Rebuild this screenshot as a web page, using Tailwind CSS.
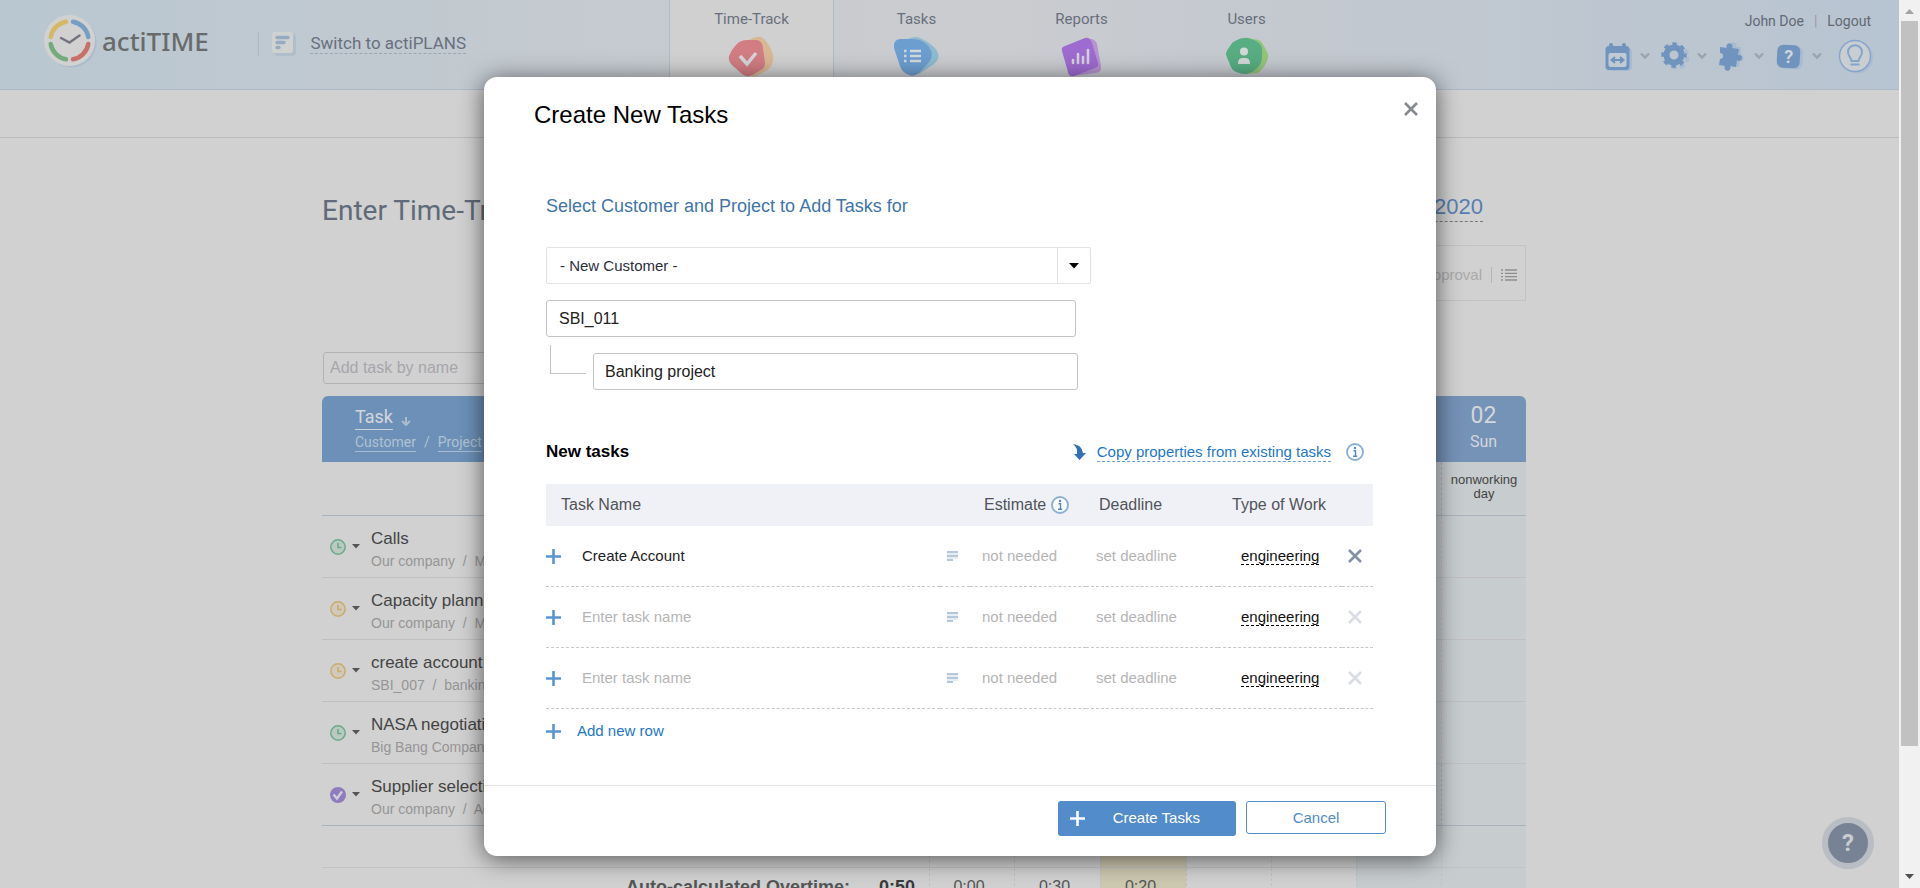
<!DOCTYPE html>
<html lang="en">
<head>
<meta charset="utf-8">
<title>actiTIME - Enter Time-Track</title>
<script src="https://cdn.jsdelivr.net/npm/@tailwindcss/browser@4"></script>
</head>
<body class="relative flex h-screen overflow-hidden bg-[#d1d1d1] font-['Liberation_Sans',Arial,sans-serif] text-[#444]">

<svg class="hidden" aria-hidden="true">
  <symbol id="chev" viewBox="0 0 12 8"><path d="M2 1.5l4 4 4-4" fill="none" stroke="#99a3b1" stroke-width="2.4"/></symbol>
  <symbol id="info" viewBox="0 0 18 18"><circle cx="9" cy="9" r="8" fill="#fbfdff" stroke="#8bb0d3" stroke-width="1.8"/><path d="M7.500 7.700h2v5.300M7 13.200h4.200" fill="none" stroke="#5688ba" stroke-width="1.400"/><circle cx="9" cy="5" r="1.200" fill="#5688ba"/></symbol>
  <symbol id="plus" viewBox="0 0 15 15"><path d="M7.500 0v15M0 7.500h15" stroke="currentColor" stroke-width="2.600"/></symbol>
  <symbol id="note" viewBox="0 0 11 10"><path d="M0 3h11M0 7h11" stroke="#e6edf3" stroke-width="2"/><path d="M0 1h11M0 5h11M0 9h6" stroke="#b4c8da" stroke-width="2"/></symbol>
  <symbol id="cross" viewBox="0 0 14 14"><path d="M1 1l12 12M13 1L1 13" stroke="currentColor" stroke-width="2.600"/></symbol>
  <symbol id="clock" viewBox="0 0 16 16"><circle cx="8" cy="8" r="7.200" fill="currentColor" fill-opacity=".2" stroke="currentColor" stroke-width="1.500"/><path d="M8 4v4.500h3.500" fill="none" stroke="currentColor" stroke-width="1.600"/></symbol>
  <symbol id="caret" viewBox="0 0 8 5"><path d="M0 0h8L4 4.500z" fill="currentColor"/></symbol>
</svg>

<div class="flex min-w-0 flex-1 flex-col overflow-hidden">
  <header class="flex h-[90px] shrink-0 border-b border-[#afb9c6] bg-linear-to-r from-[#b9c7d1] via-[#cbcccf] to-[#b7c4d1] font-[Roboto,sans-serif]">
    <div class="flex w-[669px] pl-[43px]">
      <a href="#" class="flex h-[82px] items-center" aria-label="actiTIME">
        <svg class="size-[54px]" viewBox="0 0 54 54" fill="none" stroke-width="4.500" stroke-linecap="round">
          <circle cx="28.500" cy="28.500" r="25" fill="#adbccb"/><circle cx="26.500" cy="26.500" r="25.500" fill="#d1d1d1"/>
          <path d="M7.700 23A19 19 0 0 1 23 7.700" stroke="#d5b866"/><path d="M30 7.700A19 19 0 0 1 45.300 23" stroke="#769dc4"/>
          <path d="M45.300 30A19 19 0 0 1 30 45.300" stroke="#c96f69"/><path d="M23 45.300A19 19 0 0 1 7.700 30" stroke="#75ab7c"/>
          <path d="M18 24l8.500 4.500 10-7" stroke="#747480" stroke-width="2.400"/>
        </svg>
        <span class="ml-[5px] font-['Noto_Sans',sans-serif] text-[26px] font-medium text-[#686b6b]">actiTIME</span>
      </a>
      <div class="mr-[203px] ml-auto flex h-[87px] items-center">
        <span class="h-6 w-px bg-[#a9b7c7]"></span>
        <svg class="ml-[13px] size-6" viewBox="0 0 24 24"><rect x="2" y="2" width="22" height="22" rx="4" fill="#b0bdca"/><rect width="21" height="21" rx="3" fill="#d0d1d1"/><path d="M5 5.500h11M5 10.500h7M5 15.500h2" stroke="#94abc4" stroke-width="3.400" stroke-linecap="round"/></svg>
        <a href="#" class="ml-[14px] border-b border-dashed border-[#99a7b5] text-[17px] leading-[20px] whitespace-nowrap text-[#69707d]">Switch to actiPLANS</a>
      </div>
    </div>
    <nav class="flex text-[15px] leading-5 text-[#686f7c]">
      <a href="#" class="flex w-[165px] flex-col items-center border-x border-[#afbac8] bg-[#d0d0d0] pt-[9px]">Time-Track
        <svg class="mt-[7px] h-[42px] w-12" viewBox="0 0 48 42">
          <path d="M20 5Q27 0 33 1Q38 3 43 13Q47 22 44 28Q42 34 34 37L28 40Q22 42 18 36z" fill="#d8b795"/>
          <path d="M8 9Q12 4 20 4H28Q34 4 35 12L37 27Q37 32 33 34L24 39Q19 42 14 38L5 30Q0 26 1 20Q3 14 8 9z" fill="#d17d83"/>
          <path d="M12 20l7 8 9-11" fill="none" stroke="#d4d6d8" stroke-width="3.500"/>
        </svg></a>
      <a href="#" class="flex w-[165px] flex-col items-center pt-[9px]">Tasks
        <svg class="mt-[7px] h-[42px] w-12" viewBox="0 0 48 42">
          <path d="M12 5Q20 -1 27 2Q40 8 44 15Q48 22 41 28L26 38z" fill="#8ebbd0"/>
          <path d="M1 12Q0 3 8 3H20Q30 3 36 11Q41 18 37 25L26 37Q20 42 14 38Q9 36 7 30z" fill="#6d9ed0"/>
          <path d="M11 15h2.500M11 20h2.500M11 25h2.500M17 15h11M17 20h11M17 25h11" stroke="#d3d8de" stroke-width="2.600"/>
        </svg></a>
      <a href="#" class="flex w-[165px] flex-col items-center pt-[9px]">Reports
        <svg class="mt-[7px] h-[42px] w-12" viewBox="0 0 48 42">
          <path d="M28 3Q37 2 39 8L43 30Q44 36 38 37L14 40Q10 40 10 34z" fill="#b694cf"/>
          <path d="M7 10L27 2Q32 1 34 7L40 27Q41 31 37 32L16 40Q11 41 10 36L4 15Q3 11 7 10z" fill="#9e6bd0"/>
          <path d="M15 27v-3M20 27v-9M25 27v-6M30 27V14" stroke="#d5d0dc" stroke-width="2.600" stroke-linecap="round"/>
        </svg></a>
      <a href="#" class="flex w-[165px] flex-col items-center pt-[9px]">Users
        <svg class="mt-[7px] h-[42px] w-12" viewBox="0 0 48 42">
          <path d="M24 2L36 4Q39 5 45 18Q46 22 43 27Q39 35 34 37L22 38z" fill="#94c577"/>
          <path d="M12 5Q19 1 25 2Q33 4 37 8Q40 11 39 20Q39 28 34 32Q28 38 21 38Q14 37 10 34Q8 32 6 26Q3 20 3 17Q4 14 7 10Q9 6 12 5z" fill="#58ad83"/>
          <circle cx="21" cy="15.500" r="4" fill="#d2d8d6"/><path d="M15 28q0-6 4-6h4q4 0 4 6z" fill="#d2d8d6"/>
        </svg></a>
    </nav>
    <div class="ml-auto flex flex-col items-end pt-3 pr-[26px]">
      <div class="flex gap-[10px] pr-[2px] text-[14px] leading-[18px] text-[#626974]"><a href="#">John Doe</a><span class="text-[#9a9a9a]">|</span><a href="#">Logout</a></div>
      <div class="mt-2 flex items-center">
        <button aria-label="Calendar"><svg class="size-[30px]" viewBox="0 0 30 30"><rect x="5" y="7" width="24" height="23" rx="4" fill="#a9bbd1"/><rect x="2.500" y="5" width="24" height="24" rx="3.500" fill="#7194be"/><path d="M8 4v4M21 4v4" stroke="#7194be" stroke-width="4" stroke-linecap="round"/><rect x="5.500" y="12" width="18" height="14" rx="2" fill="#c0cad4"/><path d="M9.500 19h10M12 16l-3.500 3 3.500 3M17 16l3.500 3-3.500 3" fill="#7194be" stroke="#7194be" stroke-width="2"/></svg></button>
        <svg class="ml-[6px] h-2 w-3"><use href="#chev"/></svg>
        <button class="ml-[9px]" aria-label="Settings"><svg class="size-[30px]" viewBox="0 0 30 30" fill="none"><circle cx="17" cy="16" r="10.500" stroke="#a9bbd1" stroke-width="4" stroke-dasharray="5 3.250"/><circle cx="14" cy="14" r="7.500" stroke="#7194be" stroke-width="6"/><circle cx="14" cy="14" r="11" stroke="#7194be" stroke-width="3.500" stroke-dasharray="4.500 4.140" stroke-dashoffset="2"/></svg></button>
        <svg class="ml-[6px] h-2 w-3"><use href="#chev"/></svg>
        <button class="ml-[11px]" aria-label="Integrations"><svg class="size-[30px]" viewBox="0 0 30 30"><path fill="#a9bbd1" d="M6 6h6a3 3 0 1 1 5 0h5v8a3 3 0 1 1-1 6l-1 6h-6L6 24z"/><path fill="#7194be" d="M1 6l7 1a3 3 0 1 1 5 0l7 1-1 6a3 3 0 1 1-1 5l-1 7-6-1a3 3 0 1 1-5 0l-6-1 1-6a3 3 0 1 0 0-6z"/></svg></button>
        <svg class="ml-[4px] h-2 w-3"><use href="#chev"/></svg>
        <button class="ml-[10px]" aria-label="Help"><span class="mt-px ml-[2px] flex size-[23px] rotate-3 items-center justify-center rounded-[6px] bg-[#7194be] text-[18px] font-bold text-[#d0d5da] shadow-[3px_1px_0_#a9bbd1]">?</span></button>
        <svg class="ml-[11px] h-2 w-3"><use href="#chev"/></svg>
        <button class="ml-[14px]" aria-label="Tips"><svg class="size-9" viewBox="0 0 36 36" fill="none" stroke="#84a4cb"><circle cx="20" cy="19.500" r="16" fill="#a9bbd1" stroke="none"/><circle cx="18" cy="18" r="15.500" fill="#c9ced2" stroke-width="1.400"/><path d="M14.500 23q-.5-2.500-2-4.500a7 7 0 1 1 11 0q-1.500 2-2 4.500z" stroke-width="2"/><path d="M13.500 26.500h9" stroke-width="2"/></svg></button>
      </div>
    </div>
  </header>
  <div class="h-12 shrink-0 border-b border-[#bcbcbc]"></div>

  <main class="pr-[373px] pl-[322px]">
    <div class="flex h-[107px] items-center justify-between pt-[39px] leading-8">
      <h1 class="font-[Roboto,sans-serif] text-[28px] text-[#606a79]">Enter Time-Track</h1>
      <a href="#" class="mr-[43px] mb-2 border-b border-dashed border-[#777] text-[22px] leading-[29px] text-[#557fb1]">Jan 27 - Feb 02, 2020</a>
    </div>
    <div class="ml-auto flex h-14 w-[300px] items-center justify-end border border-[#c2c2c2] pt-1 pr-2 text-[15px] text-[#aaa]">
      Submit for Approval<span class="mr-[9px] ml-[9px] h-4 w-px bg-[#b5b5b5]"></span>
      <svg class="h-3 w-4" viewBox="0 0 16 12"><path d="M0 1h2M4 1h12M0 4.300h2M4 4.300h12M0 7.600h2M4 7.600h12M0 11h2M4 11h12" stroke="#8e8e8e" stroke-width="1.300"/></svg>
    </div>
    <input type="text" aria-label="Add task by name" placeholder="Add task by name" class="mt-[51px] ml-px h-8 w-[300px] rounded-[3px] border border-[#b3b3b3] px-[6px] text-[16px] placeholder:text-[#a6a6ab]">

    <table class="mt-3 w-full table-fixed border-separate border-spacing-0">
      <colgroup><col><col class="w-[85px]"><col class="w-[86px]"><col class="w-[86px]"><col class="w-[85px]"><col class="w-[85px]"><col class="w-[85px]"><col class="w-[85px]"></colgroup>
      <thead>
        <tr class="h-[66px] font-[Roboto,sans-serif] text-[#d3d6da] *:bg-[#6c90b8]">
          <th class="rounded-tl-md pb-[2px] pl-[33px] text-left font-normal">
            <div class="flex items-center gap-2"><a href="#" class="border-b border-[#c8d0da] text-[18px] leading-6">Task</a>
            <svg class="mt-2 h-[9px] w-[10px]" viewBox="0 0 10 9"><path d="M5 0v7.500M1 4l4 4 4-4" fill="none" stroke="#a9bdcd" stroke-width="2"/></svg></div>
            <div class="mt-[3px] flex gap-2 text-[14px] leading-[18px] text-[#b0c2d3]"><a href="#" class="border-b border-[#a9bdd2]">Customer</a>/<a href="#" class="border-b border-[#a9bdd2]">Project</a></div>
          </th>
          <th></th><th></th><th></th><th></th><th></th><th class="bg-[#7592b7]!"></th>
          <th class="rounded-tr-md bg-[#7592b7]! pb-[6px] font-normal"><div class="text-[23px] leading-8">02</div><div class="text-[16px] leading-5">Sun</div></th>
        </tr>
      </thead>
      <tbody>
        <tr class="h-[54px] *:border-b *:border-[#aab3bd]"><td></td><td></td><td></td><td></td><td></td><td></td><td class="bg-[#c7cccf]"></td><td class="border-l border-dashed bg-[#c7cccf] pb-[3px] text-center text-[13px] leading-[14px] text-[#444] [border-bottom-style:solid]!">nonworking day</td></tr>
        <tr class="h-[62px] *:border-b *:border-[#c0c0c0]"><td><div class="flex items-center pl-2"><svg class="size-4 text-[#68ab8b]"><use href="#clock"/></svg><svg class="ml-[6px] h-[5px] w-2 text-[#555]"><use href="#caret"/></svg><div class="ml-[11px] pt-[5px]"><div class="text-[17px] leading-[23px]">Calls</div><div class="text-[14px] leading-[22px] whitespace-pre text-[#959595]">Our company  /  Marketing</div></div></div></td><td></td><td></td><td></td><td></td><td></td><td class="bg-[#c7cccf]"></td><td class="border-l border-dashed bg-[#c7cccf] [border-bottom-style:solid]!"></td></tr>
        <tr class="h-[62px] *:border-b *:border-[#c0c0c0]"><td><div class="flex items-center pl-2"><svg class="size-4 text-[#ccaa6b]"><use href="#clock"/></svg><svg class="ml-[6px] h-[5px] w-2 text-[#555]"><use href="#caret"/></svg><div class="ml-[11px] pt-[5px]"><div class="text-[17px] leading-[23px]">Capacity planning</div><div class="text-[14px] leading-[22px] whitespace-pre text-[#959595]">Our company  /  Marketing</div></div></div></td><td></td><td></td><td></td><td></td><td></td><td class="bg-[#c7cccf]"></td><td class="border-l border-dashed bg-[#c7cccf] [border-bottom-style:solid]!"></td></tr>
        <tr class="h-[62px] *:border-b *:border-[#c0c0c0]"><td><div class="flex items-center pl-2"><svg class="size-4 text-[#ccaa6b]"><use href="#clock"/></svg><svg class="ml-[6px] h-[5px] w-2 text-[#555]"><use href="#caret"/></svg><div class="ml-[11px] pt-[5px]"><div class="text-[17px] leading-[23px]">create account</div><div class="text-[14px] leading-[22px] whitespace-pre text-[#959595]">SBI_007  /  banking</div></div></div></td><td></td><td></td><td></td><td></td><td></td><td class="bg-[#c7cccf]"></td><td class="border-l border-dashed bg-[#c7cccf] [border-bottom-style:solid]!"></td></tr>
        <tr class="h-[62px] *:border-b *:border-[#c0c0c0]"><td><div class="flex items-center pl-2"><svg class="size-4 text-[#68ab8b]"><use href="#clock"/></svg><svg class="ml-[6px] h-[5px] w-2 text-[#555]"><use href="#caret"/></svg><div class="ml-[11px] pt-[5px]"><div class="text-[17px] leading-[23px]">NASA negotiations</div><div class="text-[14px] leading-[22px] whitespace-pre text-[#959595]">Big Bang Company</div></div></div></td><td></td><td></td><td></td><td></td><td></td><td class="bg-[#c7cccf]"></td><td class="border-l border-dashed bg-[#c7cccf] [border-bottom-style:solid]!"></td></tr>
        <tr class="h-[62px] *:border-b *:border-[#aab3bd]"><td><div class="flex items-center pl-2"><svg class="size-4" viewBox="0 0 16 16"><circle cx="8" cy="8" r="8" fill="#8f7cbd"/><path d="M3.500 7.500l3.500 4 5-7" fill="none" stroke="#d0cedb" stroke-width="2.400"/></svg><svg class="ml-[6px] h-[5px] w-2 text-[#555]"><use href="#caret"/></svg><div class="ml-[11px] pt-[5px]"><div class="text-[17px] leading-[23px]">Supplier selection</div><div class="text-[14px] leading-[22px] whitespace-pre text-[#959595]">Our company  /  Administration</div></div></div></td><td></td><td></td><td></td><td></td><td></td><td class="bg-[#c7cccf]"></td><td class="border-l border-dashed bg-[#c7cccf] [border-bottom-style:solid]!"></td></tr>
        <tr class="h-[42px] *:border-b *:border-dashed *:border-[#c0c3c5] *:[border-bottom-style:solid]! [&>*+*]:border-l"><td></td><td></td><td></td><td class="bg-[#cdc8b0]"></td><td></td><td></td><td class="bg-[#c7cccf]"></td><td class="bg-[#c7cccf]"></td></tr>
        <tr class="h-[38px] text-center text-[16px] leading-5 text-[#555] *:border-dashed *:border-[#c0c3c5] *:pr-[6px] [&>*+*]:border-l"><td class="pr-[14px]! text-right text-[18px] font-bold whitespace-nowrap"><span class="mr-[29px]">Auto-calculated Overtime:</span><span class="text-[#3a3a3a]">0:50</span></td><td>0:00</td><td>0:30</td><td class="bg-[#cdc8b0]">0:20</td><td></td><td></td><td class="bg-[#c7cccf]"></td><td class="bg-[#c7cccf]"></td></tr>
      </tbody>
    </table>
  </main>
</div>

<!-- page scrollbar -->
<div class="flex w-[21px] flex-col items-center bg-[#f1f1f1]">
  <svg class="mt-[9px] h-[5px] w-[9px]" viewBox="0 0 9 5"><path d="M0 5h9L4.500 0z" fill="#a3a3a3"/></svg>
  <div class="mt-[7px] h-[725px] w-[17px] bg-[#c1c1c1]"></div>
  <svg class="mt-auto mb-[9px] h-[5px] w-[9px]" viewBox="0 0 9 5"><path d="M0 0h9L4.500 5z" fill="#505050"/></svg>
</div>

<button aria-label="Support" class="absolute right-[46px] bottom-[19px] flex size-[52px] items-center justify-center rounded-full border-6 border-[#b9bec5] bg-[#778294] font-[Roboto,sans-serif] text-[24px] font-bold text-[#c9ccd1]">?</button>

<div class="absolute inset-0 flex items-start justify-center pt-[77px]">
  <form role="dialog" aria-labelledby="dlg" class="w-[952px] rounded-[13px] bg-white shadow-[0_3px_24px_rgba(0,0,0,0.6)]">
    <div class="flex h-[75px] items-center justify-between pr-[18px] pl-[50px]">
      <h2 id="dlg" class="text-[24px] text-black">Create New Tasks</h2>
      <button type="button" aria-label="Close" class="mb-3 text-[#858a90]"><svg class="size-[14px]"><use href="#cross"/></svg></button>
    </div>
    <div class="h-[633px] pr-[63px] pl-[62px]">
      <h3 class="pt-10 text-[18px] leading-7 text-[#3f75a9]">Select Customer and Project to Add Tasks for</h3>
      <div class="mt-[27px] flex h-[37px] w-[545px] items-center rounded-xs border border-[#e2e2e2]">
        <select aria-label="Customer" class="h-full flex-1 appearance-none pt-[2px] pl-[13px] text-[15px] text-[#2c2f3c]"><option>- New Customer -</option></select>
        <span class="flex h-full w-[33px] items-center justify-center border-l border-[#e2e2e2] text-black"><svg class="h-[6px] w-[10px]" viewBox="0 0 10 6"><path d="M0 0h10L5 5.500z"/></svg></span>
      </div>
      <input type="text" aria-label="Customer name" value="SBI_011" class="mt-4 block h-[37px] w-[530px] rounded-[3px] border border-[#c4c4c4] px-3 text-[16px] text-[#222]">
      <div class="mt-2 flex">
        <span class="ml-1 h-[29px] w-9 border-b border-l border-[#c4c4c4]"></span>
        <input type="text" aria-label="Project name" value="Banking project" class="mt-2 ml-[7px] block h-[37px] w-[485px] rounded-[3px] border border-[#c4c4c4] px-[11px] text-[16px] text-[#222]">
      </div>
      <div class="mt-[49px] flex items-center pr-[9px] leading-[26px]">
        <h4 class="mr-auto text-[17px] font-bold text-black">New tasks</h4>
        <svg class="mr-[11px] h-4 w-[13px]" viewBox="0 0 13 16"><path d="M0 0q9 1 10 9h3L6.500 16 1 10h3q1-6-4-10z" fill="#2f70b8"/></svg>
        <a href="#" class="border-b border-dashed border-[#6aa0da] text-[15px] leading-[18px] text-[#2277c7]">Copy properties from existing tasks</a>
        <svg class="ml-[15px] size-[18px]"><use href="#info"/></svg>
      </div>
      <table class="mt-[19px] w-full table-fixed border-separate border-spacing-0 text-left text-[15px] text-[#b5b5b5] [&_td]:border-b [&_td]:border-dashed [&_td]:border-[#c8c8c8]">
        <colgroup><col><col class="w-[30px]"><col class="w-[116px]"><col class="w-[132px]"><col class="w-[124px]"><col class="w-[31px]"></colgroup>
        <thead><tr class="h-[42px] bg-[#f0f1f6] text-[16px] text-[#50545a] *:font-normal"><th class="pl-[15px]">Task Name</th><th></th><th class="pl-[14px]"><span class="flex items-center gap-[5px]">Estimate<svg class="size-[18px]"><use href="#info"/></svg></span></th><th class="pl-[13px]">Deadline</th><th class="pl-[14px]">Type of Work</th><th></th></tr></thead>
        <tbody>
          <tr class="h-[61px]"><td><div class="flex items-center gap-[21px]"><svg class="size-[15px] text-[#5a94d2]"><use href="#plus"/></svg><input aria-label="Task name 1" value="Create Account" placeholder="Enter task name" class="flex-1 text-[#222] placeholder:text-[#b5b5b5]"></div></td><td class="pl-[7px]"><svg class="h-[10px] w-[11px]"><use href="#note"/></svg></td><td class="pl-3">not needed</td><td class="pl-[10px]">set deadline</td><td class="pl-[23px]"><button type="button" class="border-b border-dashed border-black leading-[17px] text-[#111]">engineering</button></td><td class="pl-[6px]"><button type="button" aria-label="Remove row 1" class="block text-[#8290a8]"><svg class="size-[14px]"><use href="#cross"/></svg></button></td></tr>
          <tr class="h-[61px]"><td><div class="flex items-center gap-[21px]"><svg class="size-[15px] text-[#5a94d2]"><use href="#plus"/></svg><input aria-label="Task name 2" placeholder="Enter task name" class="flex-1 text-[#222] placeholder:text-[#b5b5b5]"></div></td><td class="pl-[7px]"><svg class="h-[10px] w-[11px]"><use href="#note"/></svg></td><td class="pl-3">not needed</td><td class="pl-[10px]">set deadline</td><td class="pl-[23px]"><button type="button" class="border-b border-dashed border-black leading-[17px] text-[#111]">engineering</button></td><td class="pl-[6px]"><button type="button" aria-label="Remove row 2" class="block text-[#dadde4]"><svg class="size-[14px]"><use href="#cross"/></svg></button></td></tr>
          <tr class="h-[61px]"><td><div class="flex items-center gap-[21px]"><svg class="size-[15px] text-[#5a94d2]"><use href="#plus"/></svg><input aria-label="Task name 3" placeholder="Enter task name" class="flex-1 text-[#222] placeholder:text-[#b5b5b5]"></div></td><td class="pl-[7px]"><svg class="h-[10px] w-[11px]"><use href="#note"/></svg></td><td class="pl-3">not needed</td><td class="pl-[10px]">set deadline</td><td class="pl-[23px]"><button type="button" class="border-b border-dashed border-black leading-[17px] text-[#111]">engineering</button></td><td class="pl-[6px]"><button type="button" aria-label="Remove row 3" class="block text-[#dadde4]"><svg class="size-[14px]"><use href="#cross"/></svg></button></td></tr>
        </tbody>
      </table>
      <button type="button" class="mt-3 flex items-center gap-4 text-[15px] leading-5 text-[#2277c7]"><svg class="size-[15px] text-[#5a94d2]"><use href="#plus"/></svg>Add new row</button>
    </div>
    <div class="flex h-[71px] items-start justify-end gap-[10px] border-t border-[#e6e6e6] pt-[15px] pr-[50px] text-[15px]">
      <button type="submit" class="flex h-[35px] w-[178px] items-center rounded-[3px] bg-[#528cca] pl-3 text-white"><svg class="size-[15px]"><use href="#plus"/></svg><span class="flex-1 text-center whitespace-pre">Create Tasks  </span></button>
      <button type="button" class="h-[33px] w-[140px] rounded-[3px] border border-[#528cca] pt-px text-[#528cca]">Cancel</button>
    </div>
  </form>
</div>
</body>
</html>
